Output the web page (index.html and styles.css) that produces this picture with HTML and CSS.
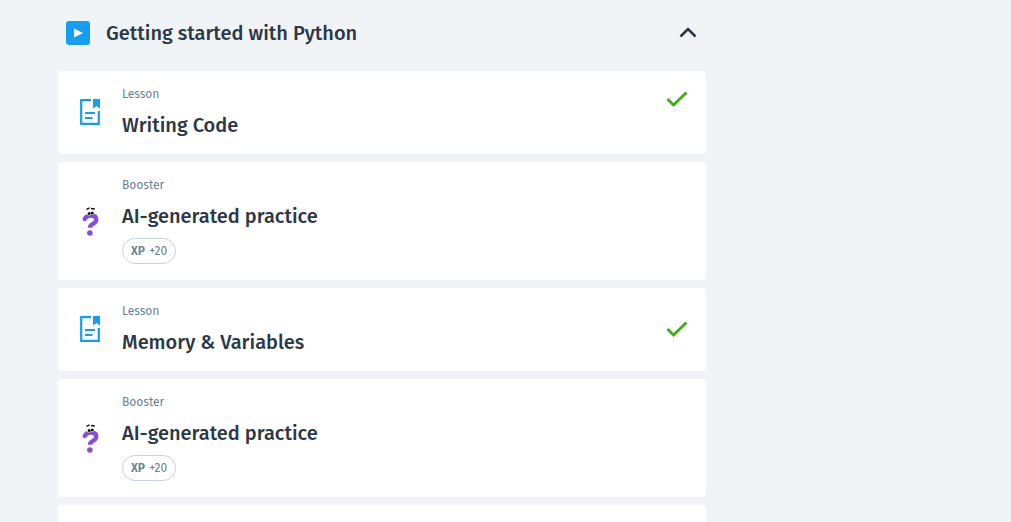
FILE: index.html
```html
<!DOCTYPE html>
<html lang="en">
<head>
<meta charset="utf-8">
<meta name="viewport" content="width=device-width, initial-scale=1">
<title>Getting started with Python</title>
<link rel="stylesheet" href="styles.css">
</head>
<body>
<svg class="defs" aria-hidden="true">
  <symbol id="lesson" viewBox="0 0 20 26">
    <path d="M11 1.200H1.200v23.600h17.600V12" fill="none" stroke="#149ef2" stroke-width="2.200"/>
    <path d="M13 0h7v9.500l-3.500-2.600L13 9.500z" fill="#149ef2"/>
    <path d="M5 14h10M5 19h7.500" fill="none" stroke="#149ef2" stroke-width="2"/>
  </symbol>
  <symbol id="booster" viewBox="0 0 20 30">
    <path d="M4.800 13C6 10.200 8.500 9.500 11 9.500c3.500 0 5.200 1.800 5.200 4.200 0 4.500-6.200 4-6.200 8" fill="none" stroke="#854fdc" stroke-width="4.400"/>
    <circle cx="4.700" cy="13.100" r="2.200" fill="#854fdc"/>
    <circle cx="9.900" cy="27" r="2.800" fill="#854fdc"/>
    <circle cx="9" cy="7.200" r="2.200" fill="#fff"/>
    <circle cx="12.200" cy="6.800" r="2.200" fill="#fff"/>
    <circle cx="9.200" cy="7.500" r="1.500" fill="#111"/>
    <circle cx="12.300" cy="7" r="1.500" fill="#111"/>
    <path d="M6.500 3.400l3-1.600M11 2.500l3.800.5" stroke="#111" stroke-width="1.500"/>
  </symbol>
  <symbol id="check" viewBox="0 0 22 16">
    <path d="M1.500 8l6 6L20.500 1.500" fill="none" stroke="#3db010" stroke-width="2.800"/>
  </symbol>
</svg>
<main class="module">
  <button class="module-header" type="button" aria-expanded="true" aria-controls="steps">
    <svg class="play" viewBox="0 0 24 24" aria-hidden="true">
      <rect width="24" height="24" rx="3" fill="#149ef2"/>
      <path d="M8 7.500v9l9-4.500z" fill="#fff"/>
    </svg>
    <span class="module-title">Getting started with Python</span>
    <svg class="chevron" viewBox="0 0 18 12" aria-hidden="true">
      <path d="M1.500 9.500L9 2l7.500 7.500" fill="none" stroke="#2d3846" stroke-width="2.600"/>
    </svg>
  </button>
  <div class="steps" id="steps">
    <article class="card">
      <svg class="lesson-icon" aria-hidden="true"><use href="#lesson"/></svg>
      <div class="details">
        <span class="kind">Lesson</span>
        <a class="title" href="#writing-code">Writing Code</a>
      </div>
      <svg class="check check-top" role="img" aria-label="Completed"><use href="#check"/></svg>
    </article>
    <article class="card">
      <svg class="booster-icon" aria-hidden="true"><use href="#booster"/></svg>
      <div class="details">
        <span class="kind">Booster</span>
        <a class="title" href="#practice-1">AI-generated practice</a>
        <span class="xp"><b class="xp-label">XP</b> +20</span>
      </div>
    </article>
    <article class="card">
      <svg class="lesson-icon" aria-hidden="true"><use href="#lesson"/></svg>
      <div class="details">
        <span class="kind">Lesson</span>
        <a class="title" href="#memory">Memory &amp; Variables</a>
      </div>
      <svg class="check" role="img" aria-label="Completed"><use href="#check"/></svg>
    </article>
    <article class="card">
      <svg class="booster-icon" aria-hidden="true"><use href="#booster"/></svg>
      <div class="details">
        <span class="kind">Booster</span>
        <a class="title" href="#practice-2">AI-generated practice</a>
        <span class="xp"><b class="xp-label">XP</b> +20</span>
      </div>
    </article>
    <article class="card card-empty"></article>
  </div>
</main>
</body>
</html>
```
FILE: styles.css
```css
* {
  box-sizing: border-box;
}

body {
  margin: 0;
  background: #f0f4f7;
  color: #2d3846;
  font-family: "Fira Sans", "Noto Sans", sans-serif;
}

.defs {
  display: none;
}

.module {
  max-width: 706px;
  padding: 13px 0 0 58px;
}

.module-header {
  display: flex;
  align-items: center;
  gap: 16px;
  width: 100%;
  padding: 6px 9px 6px 8px;
  border: 0;
  background: none;
  color: inherit;
  font: inherit;
  text-align: left;
  cursor: pointer;
}

.module-title,
.title {
  font-size: 20px;
  line-height: 28px;
  font-weight: 500;
}

.module-title {
  flex: 1;
}

.play {
  width: 24px;
  height: 24px;
}

.chevron {
  width: 18px;
  height: 12px;
}

.steps {
  display: grid;
  gap: 8px;
  margin-top: 18px;
}

.card {
  display: flex;
  align-items: center;
  gap: 22px;
  padding: 14px 18px 15px 22px;
  border-radius: 4px;
  background: #fff;
}

.card-empty {
  min-height: 18px;
  border-radius: 4px 4px 0 0;
  padding-block: 0;
}

.lesson-icon {
  flex: none;
  width: 20px;
  height: 26px;
}

.booster-icon {
  flex: none;
  width: 20px;
  height: 30px;
}

.details {
  display: flex;
  flex: 1;
  flex-direction: column;
  align-items: flex-start;
  gap: 8px;
}

.kind {
  font-size: 12px;
  line-height: 18px;
  color: #687f95;
}

.title {
  color: inherit;
  text-decoration: none;
}

.xp {
  margin-bottom: 1px;
  padding: 0 8px;
  border: 1px solid #c8d2db;
  border-radius: 13px;
  font-size: 12px;
  line-height: 24px;
  color: #687f95;
}

.xp-label {
  margin-right: 1px;
  font-weight: 600;
}

.check {
  width: 22px;
  height: 16px;
}

.check-top {
  align-self: flex-start;
  margin-top: 6px;
}
```
